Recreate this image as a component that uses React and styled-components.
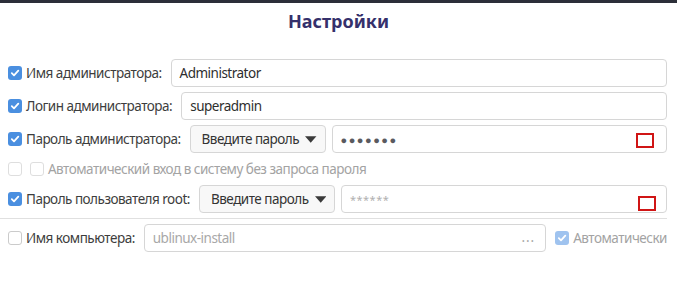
import React from 'react'
import styled, { createGlobalStyle } from 'styled-components'

const Global = createGlobalStyle`
  body {
    margin: 0;
    background: #fff;
    font-family: "Noto Sans", "Open Sans", sans-serif;
    font-size: 13.5px;
    letter-spacing: -0.5px;
    color: #3d3d3d;
  }
`

const Page = styled.div`
  width: 677px;
  height: 282px;
  overflow: hidden;
`

const TopBar = styled.div`
  height: 3px;
  background: #2c2f39;
`

const Title = styled.h1`
  margin: 0;
  padding-top: 6px;
  height: 50px;
  box-sizing: border-box;
  text-align: center;
  font-size: 18px;
  font-weight: 700;
  letter-spacing: 0;
  color: #35306b;
`

const Form = styled.div`
  display: flex;
  flex-direction: column;
  gap: 5px;
  padding: 6px 10px 0 8px;
`

const Row = styled.div`
  display: flex;
  align-items: center;
  height: ${p => (p.$short ? '22px' : '28px')};
`

const Check = styled.span`
  flex: none;
  box-sizing: border-box;
  width: 14px;
  height: 14px;
  border-radius: 3px;
  margin-right: ${p => p.$gap || '4px'};
  display: flex;
  align-items: center;
  justify-content: center;
  background: ${p => (p.$on ? (p.$dim ? '#9fc3ef' : '#4a8fe0') : '#fff')};
  border: 1px solid ${p => (p.$on ? 'transparent' : p.$dim ? '#dedede' : '#cbcbcb')};
`

const Label = styled.span`
  white-space: nowrap;
  margin-right: 9px;
  color: ${p => (p.$dim ? '#a3a3a3' : '#3d3d3d')};
`

const Entry = styled.div`
  flex: 1;
  height: 28px;
  box-sizing: border-box;
  border: 1px solid #d6d6d6;
  border-radius: 4px;
  background: #fff;
  display: flex;
  align-items: center;
  padding: 0 10px 0 8px;
  color: ${p => (p.$dim ? '#a8a8a8' : '#2e2e2e')};
`

const EntryText = styled.span`
  flex: 1;
  white-space: nowrap;
`

const Dots = styled.span`
  flex: 1;
  font-size: 11px;
  letter-spacing: 1.5px;
  color: #5a5a5f;
`

const Stars = styled.span`
  flex: 1;
  font-size: 11px;
  color: #b0b0b0;
  letter-spacing: 0.5px;
`

const Marker = styled.span`
  flex: none;
  align-self: flex-end;
  width: 18px;
  height: 15px;
  box-sizing: border-box;
  border: 2px solid #d01515;
  margin-bottom: ${p => p.$low || '4px'};
  margin-right: ${p => p.$right || '2px'};
`

const Ellipsis = styled.span`
  align-self: flex-end;
  margin-bottom: 5px;
  color: #a8a8a8;
  letter-spacing: 1px;
`

const Dropdown = styled.div`
  flex: none;
  width: 136px;
  height: 28px;
  box-sizing: border-box;
  margin-right: 6px;
  border: 1px solid #d6d6d6;
  border-radius: 4px;
  background: #f8f8f8;
  display: flex;
  align-items: center;
  padding: 0 8px 0 11px;
  gap: 6px;
  white-space: nowrap;
  color: #333;
`

const Arrow = styled.svg`
  width: 12px;
  height: 7px;
  fill: #3a3a3a;
`

const Separator = styled.div`
  height: 1px;
  background: #e0e0e0;
  margin: 0 0 0 -8px;
`

const Side = styled.div`
  display: flex;
  align-items: center;
  margin-left: 9px;
  white-space: nowrap;
  color: #a3a3a3;
`

function Tick({ color = '#fff' }) {
  return (
    <svg width="10" height="10" viewBox="0 0 10 10">
      <path d="M1.8 5.2 L4 7.3 L8.3 2.6" fill="none" stroke={color} strokeWidth="1.8" strokeLinecap="round" strokeLinejoin="round" />
    </svg>
  )
}

function DropArrow() {
  return (
    <Arrow viewBox="0 0 12 7">
      <path d="M0 0 H12 L6 7 Z" />
    </Arrow>
  )
}

export default function App() {
  return (
    <Page>
      <Global />
      <TopBar />
      <Title>Настройки</Title>
      <Form>
        <Row>
          <Check $on><Tick /></Check>
          <Label>Имя администратора:</Label>
          <Entry><EntryText>Administrator</EntryText></Entry>
        </Row>
        <Row>
          <Check $on><Tick /></Check>
          <Label>Логин администратора:</Label>
          <Entry><EntryText>superadmin</EntryText></Entry>
        </Row>
        <Row>
          <Check $on><Tick /></Check>
          <Label>Пароль администратора:</Label>
          <Dropdown>Введите пароль <DropArrow /></Dropdown>
          <Entry>
            <Dots>●●●●●●●</Dots>
            <Marker />
          </Entry>
        </Row>
        <Row $short>
          <Check $dim $gap="8px" />
          <Check $dim />
          <Label $dim>Автоматический вход в систему без запроса пароля</Label>
        </Row>
        <Row>
          <Check $on><Tick /></Check>
          <Label>Пароль пользователя root:</Label>
          <Dropdown>Введите пароль <DropArrow /></Dropdown>
          <Entry>
            <Stars>******</Stars>
            <Marker $low="1px" $right="0" />
          </Entry>
        </Row>
        <Separator />
        <Row>
          <Check />
          <Label>Имя компьютера:</Label>
          <Entry $dim>
            <EntryText>ublinux-install</EntryText>
            <Ellipsis>...</Ellipsis>
          </Entry>
          <Side>
            <Check $on $dim><Tick /></Check>
            Автоматически
          </Side>
        </Row>
      </Form>
    </Page>
  )
}
